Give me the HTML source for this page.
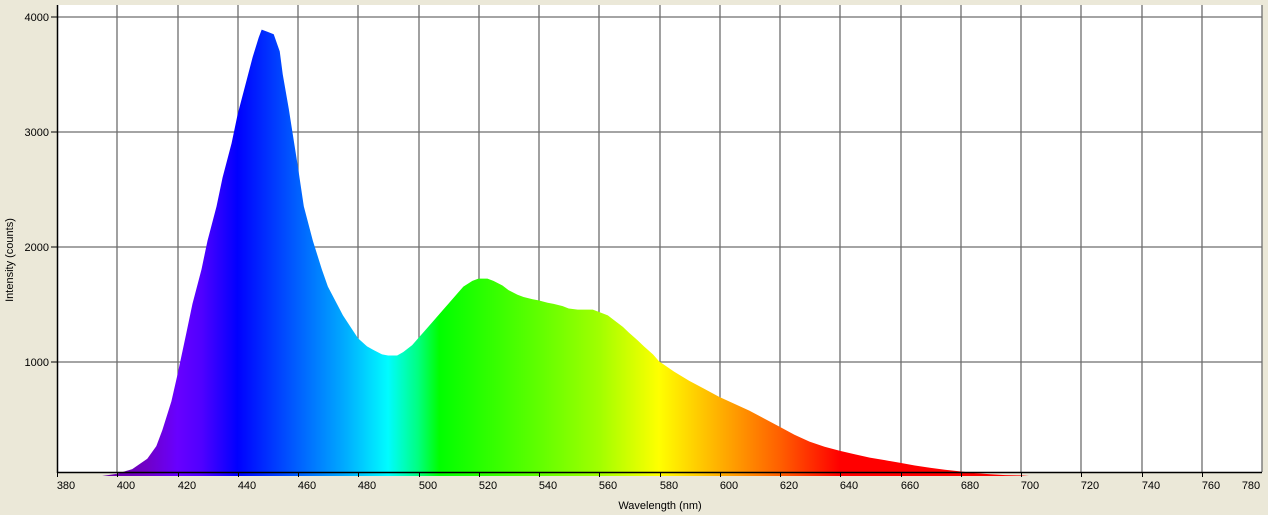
<!DOCTYPE html>
<html><head><style>
html,body{margin:0;padding:0;background:#ebe8d8;}
svg{display:block;font-family:"Liberation Sans",sans-serif;font-size:11px;}
</style></head><body>
<svg width="1268" height="515" viewBox="0 0 1268 515">
<defs>
<linearGradient id="g" gradientUnits="userSpaceOnUse" x1="0" y1="0" x2="1000" y2="0">
<stop offset="0.395" stop-color="#6a00a0"/>
<stop offset="0.410" stop-color="#7000c8"/>
<stop offset="0.420" stop-color="#6800ff"/>
<stop offset="0.428" stop-color="#5000ff"/>
<stop offset="0.440" stop-color="#0000ff"/>
<stop offset="0.460" stop-color="#0060ff"/>
<stop offset="0.475" stop-color="#00a8ff"/>
<stop offset="0.490" stop-color="#00fcff"/>
<stop offset="0.500" stop-color="#00ff80"/>
<stop offset="0.507" stop-color="#00ff00"/>
<stop offset="0.540" stop-color="#60ff00"/>
<stop offset="0.560" stop-color="#a0ff00"/>
<stop offset="0.580" stop-color="#ffff00"/>
<stop offset="0.600" stop-color="#ffb000"/>
<stop offset="0.620" stop-color="#ff6000"/>
<stop offset="0.640" stop-color="#ff0000"/>
<stop offset="0.700" stop-color="#ff0000"/>
</linearGradient>
</defs>
<rect x="57" y="5" width="1205" height="467" fill="#fff"/>
<g stroke="#6e6e6e" stroke-width="1.3">
<line x1="117" y1="5" x2="117" y2="472"/><line x1="178" y1="5" x2="178" y2="472"/><line x1="238" y1="5" x2="238" y2="472"/><line x1="298" y1="5" x2="298" y2="472"/><line x1="358" y1="5" x2="358" y2="472"/><line x1="419" y1="5" x2="419" y2="472"/><line x1="479" y1="5" x2="479" y2="472"/><line x1="539" y1="5" x2="539" y2="472"/><line x1="599" y1="5" x2="599" y2="472"/><line x1="660" y1="5" x2="660" y2="472"/><line x1="720" y1="5" x2="720" y2="472"/><line x1="780" y1="5" x2="780" y2="472"/><line x1="840" y1="5" x2="840" y2="472"/><line x1="901" y1="5" x2="901" y2="472"/><line x1="961" y1="5" x2="961" y2="472"/><line x1="1021" y1="5" x2="1021" y2="472"/><line x1="1081" y1="5" x2="1081" y2="472"/><line x1="1142" y1="5" x2="1142" y2="472"/><line x1="1202" y1="5" x2="1202" y2="472"/><line x1="1262" y1="5" x2="1262" y2="472"/>
<line x1="57" y1="17" x2="1262" y2="17"/><line x1="57" y1="132" x2="1262" y2="132"/><line x1="57" y1="247" x2="1262" y2="247"/><line x1="57" y1="362" x2="1262" y2="362"/>
</g>
<g transform="translate(57,476) scale(3.01,-0.11475) translate(-380,0)">
<polygon fill="url(#g)" points="395,0 400,20 405,60 410,150 413,260 415,400 418,650 420,880 423,1250 425,1500 428,1800 430,2050 433,2350 435,2600 438,2900 440,3150 443,3450 445,3650 447,3820 448,3890 450,3870 452,3850 454,3700 455,3500 457,3200 460,2700 462,2350 465,2050 468,1800 470,1650 473,1500 475,1400 478,1280 480,1200 483,1130 485,1100 488,1060 490,1050 493,1050 495,1080 498,1140 500,1200 503,1290 505,1350 508,1440 510,1500 513,1590 515,1650 518,1700 520,1720 523,1720 525,1700 528,1660 530,1620 533,1580 535,1560 538,1540 540,1530 543,1510 545,1500 548,1480 550,1460 553,1450 555,1450 558,1450 560,1430 563,1400 565,1360 568,1300 570,1250 573,1180 575,1130 578,1060 580,1000 585,910 590,830 595,760 600,690 605,630 610,570 615,500 620,430 625,360 630,300 635,255 640,220 645,190 650,160 655,138 660,115 665,92 670,72 675,55 680,40 685,25 690,15 695,8 700,5 703,0"/>
</g>
<g stroke="#000" stroke-width="1.5">
<line x1="57.5" y1="5" x2="57.5" y2="473"/>
<line x1="57" y1="472.5" x2="1262" y2="472.5"/>
</g>
<g stroke="#000" stroke-width="1">
<line x1="51" y1="17" x2="57" y2="17"/><line x1="51" y1="132" x2="57" y2="132"/><line x1="51" y1="247" x2="57" y2="247"/><line x1="51" y1="362" x2="57" y2="362"/>
<line x1="57.5" y1="472" x2="57.5" y2="477"/><line x1="117.5" y1="472" x2="117.5" y2="477"/><line x1="178.5" y1="472" x2="178.5" y2="477"/><line x1="238.5" y1="472" x2="238.5" y2="477"/><line x1="298.5" y1="472" x2="298.5" y2="477"/><line x1="358.5" y1="472" x2="358.5" y2="477"/><line x1="419.5" y1="472" x2="419.5" y2="477"/><line x1="479.5" y1="472" x2="479.5" y2="477"/><line x1="539.5" y1="472" x2="539.5" y2="477"/><line x1="599.5" y1="472" x2="599.5" y2="477"/><line x1="660.5" y1="472" x2="660.5" y2="477"/><line x1="720.5" y1="472" x2="720.5" y2="477"/><line x1="780.5" y1="472" x2="780.5" y2="477"/><line x1="840.5" y1="472" x2="840.5" y2="477"/><line x1="901.5" y1="472" x2="901.5" y2="477"/><line x1="961.5" y1="472" x2="961.5" y2="477"/><line x1="1021.5" y1="472" x2="1021.5" y2="477"/><line x1="1081.5" y1="472" x2="1081.5" y2="477"/><line x1="1142.5" y1="472" x2="1142.5" y2="477"/><line x1="1202.5" y1="472" x2="1202.5" y2="477"/>
</g>
<g fill="#000" text-anchor="end">
<text x="49" y="21">4000</text><text x="49" y="136">3000</text><text x="49" y="251">2000</text><text x="49" y="366">1000</text>
</g>
<g fill="#000" text-anchor="middle">
<text x="66" y="489">380</text><text x="126" y="489">400</text><text x="187" y="489">420</text><text x="247" y="489">440</text><text x="307" y="489">460</text><text x="367" y="489">480</text><text x="428" y="489">500</text><text x="488" y="489">520</text><text x="548" y="489">540</text><text x="608" y="489">560</text><text x="669" y="489">580</text><text x="729" y="489">600</text><text x="789" y="489">620</text><text x="849" y="489">640</text><text x="910" y="489">660</text><text x="970" y="489">680</text><text x="1030" y="489">700</text><text x="1090" y="489">720</text><text x="1151" y="489">740</text><text x="1211" y="489">760</text><text x="1251" y="489">780</text>
<text x="660" y="509">Wavelength (nm)</text>
<text transform="translate(13,260) rotate(-90)">Intensity (counts)</text>
</g>
</svg>
</body></html>
